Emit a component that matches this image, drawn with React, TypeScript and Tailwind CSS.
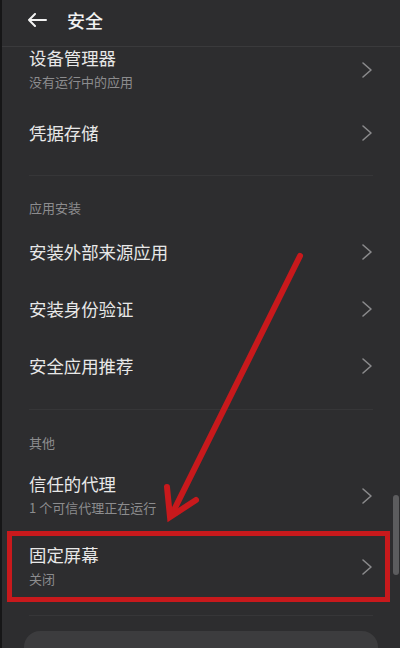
import React from 'react';

const font = { fontFamily: '"Noto Sans CJK SC", "Noto Sans", sans-serif' };

function Chevron() {
  return (
    <svg width="12" height="18" viewBox="0 0 12 18" className="shrink-0">
      <path d="M2 2 L10 9 L2 16" fill="none" stroke="#8a8a8c" strokeWidth="1.6" strokeLinecap="round" strokeLinejoin="round" />
    </svg>
  );
}

function Row({ title, sub }: { title: string; sub?: string }) {
  return (
    <div className="flex items-center justify-between">
      <div className="flex flex-col">
        <span className="text-[17.4px] leading-[22px] text-[#e8e8e8]">{title}</span>
        {sub && <span className="mt-[3px] text-[13px] leading-[20px] text-[#8c8c8e]">{sub}</span>}
      </div>
      <Chevron />
    </div>
  );
}

function Section({ label }: { label: string }) {
  return <div className="text-[13px] leading-[18px] text-[#8c8c8e]">{label}</div>;
}

export default function App() {
  return (
    <div className="relative w-[400px] h-[648px] overflow-hidden bg-[#2d2d2f] border-l-2 border-[#161617]" style={font}>
      {/* header */}
      <div className="h-[47px] border-b border-[#3a3a3c]">
        <div className="flex h-[40px] items-center gap-[20px] pl-[25px]">
          <svg width="20" height="14" viewBox="0 0 20 14">
            <path d="M19 7 H2 M8 1 L2 7 L8 13" fill="none" stroke="#f2f2f2" strokeWidth="2" strokeLinecap="round" strokeLinejoin="round" />
          </svg>
          <span className="text-[18px] font-medium text-[#f2f2f2]">安全</span>
        </div>
      </div>

      <div className="flex flex-col pl-[27px] pr-[27px]">
        <div className="pb-[14px]">
          <Row title="设备管理器" sub="没有运行中的应用" />
        </div>
        <div className="flex h-[54px] flex-col justify-center">
          <Row title="凭据存储" />
        </div>

        <div className="mt-[15px] h-px bg-[#363638]" />
        <div className="mt-[23px]">
          <Section label="应用安装" />
        </div>
        <div className="mt-[6px] flex flex-col">
          <div className="flex h-[57px] flex-col justify-center">
            <Row title="安装外部来源应用" />
          </div>
          <div className="flex h-[57px] flex-col justify-center">
            <Row title="安装身份验证" />
          </div>
          <div className="flex h-[57px] flex-col justify-center">
            <Row title="安全应用推荐" />
          </div>
        </div>

        <div className="mt-[15px] h-px bg-[#363638]" />
        <div className="mt-[24px]">
          <Section label="其他" />
        </div>
        <div className="mt-[8px] py-[13px]">
          <Row title="信任的代理" sub="1 个可信代理正在运行" />
        </div>
        <div className="relative py-[13px]">
          <Row title="固定屏幕" sub="关闭" />
          <div className="absolute -left-[22px] -right-[17px] top-0 bottom-0 border-[5px] border-[#c8191c]" />
        </div>

        <div className="mt-[13px] h-px bg-[#363638]" />
      </div>

      <div className="mt-[15px] px-[22px]">
        <div className="h-[60px] rounded-2xl bg-[#3c3c3e]" />
      </div>

      {/* scrollbar */}
      <div className="absolute right-[1px] top-[495px] h-[80px] w-[6px] rounded-full bg-[#5c5c5e]" />

      {/* annotation arrow */}
      <svg className="pointer-events-none absolute left-0 top-0" width="400" height="648" viewBox="0 0 400 648">
        <line x1="298" y1="256" x2="171" y2="512" stroke="#c8191c" strokeWidth="6" strokeLinecap="round" />
        <polyline points="165,487 168,517 194,500" fill="none" stroke="#c8191c" strokeWidth="6" strokeLinecap="round" strokeLinejoin="miter" />
      </svg>
    </div>
  );
}
